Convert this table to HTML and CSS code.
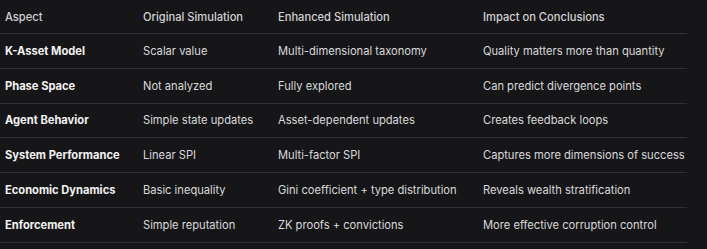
FILE: index.html
```html
<!DOCTYPE html>
<html>
<head>
<meta charset="utf-8">
<link rel="stylesheet" href="styles.css">
</head>
<body>
<table class="cmp">
  <colgroup>
    <col class="c1"><col class="c2"><col class="c3"><col class="c4">
  </colgroup>
  <thead>
    <tr><th>Aspect</th><th>Original Simulation</th><th>Enhanced Simulation</th><th>Impact on Conclusions</th></tr>
  </thead>
  <tbody>
    <tr><td>K-Asset Model</td><td>Scalar value</td><td>Multi-dimensional taxonomy</td><td>Quality matters more than quantity</td></tr>
    <tr><td>Phase Space</td><td>Not analyzed</td><td>Fully explored</td><td>Can predict divergence points</td></tr>
    <tr><td>Agent Behavior</td><td>Simple state updates</td><td>Asset-dependent updates</td><td>Creates feedback loops</td></tr>
    <tr><td>System Performance</td><td>Linear SPI</td><td>Multi-factor SPI</td><td>Captures more dimensions of success</td></tr>
    <tr><td>Economic Dynamics</td><td>Basic inequality</td><td>Gini coefficient + type distribution</td><td>Reveals wealth stratification</td></tr>
    <tr><td>Enforcement</td><td>Simple reputation</td><td>ZK proofs + convictions</td><td>More effective corruption control</td></tr>
  </tbody>
</table>
</body>
</html>
```
FILE: styles.css
```css
html, body {
  margin: 0;
  padding: 0;
  background: #161618;
}
body {
  font-family: Inter, "Noto Sans", sans-serif;
  font-size: 11.15px;
  color: #dcdcdc;
}
.cmp {
  border-collapse: collapse;
  table-layout: fixed;
  width: 687px;
}
.c1 { width: 138px; }
.c2 { width: 135px; }
.c3 { width: 205px; }
.c4 { width: 209px; }
.cmp th, .cmp td {
  text-align: left;
  padding: 0 0 0 5px;
  border-bottom: 1px solid #303033;
  white-space: nowrap;
  vertical-align: middle;
}
.cmp th {
  height: 33px;
  font-weight: 500;
  color: #d2d2d4;
}
.cmp td {
  height: 33.8px;
  font-weight: 400;
  color: #dadadc;
}
.cmp td:first-child {
  font-weight: 700;
  color: #f2f2f2;
}
```
